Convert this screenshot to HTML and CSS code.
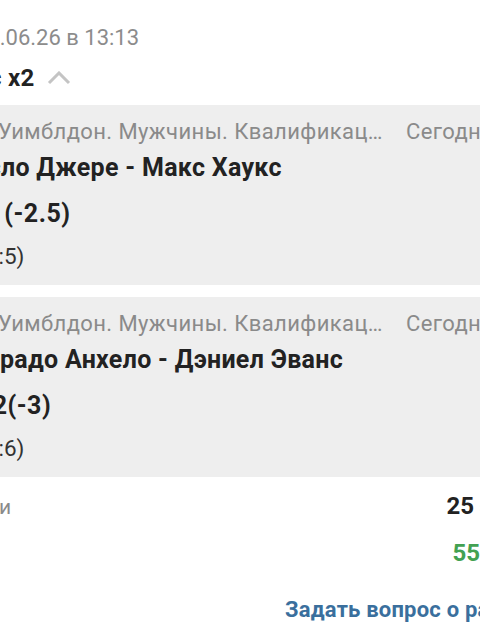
FILE: index.html
```html
<!DOCTYPE html>
<html lang="ru">
<head>
    <meta charset="UTF-8">
    <meta name="viewport" content="width=device-width, initial-scale=1.0">
    <title>Ставка</title>
    <link rel="stylesheet" href="styles.css">
</head>
<body>
    <div class="bet-screen">
        <div class="bet-header">
            <div class="bet-date">25.06.26 в 13:13</div>
            <div class="bet-title">
                <span class="bet-title-text">Экспресс x2</span>
                <svg class="chevron" width="24" height="14" viewBox="0 0 24 14">
                    <polyline points="2,12 12,2 22,12" fill="none" stroke="#c4c4c4" stroke-width="3"/>
                </svg>
            </div>
        </div>

        <div class="event-card">
            <div class="event-top">
                <span class="event-league">Уимблдон. Мужчины. Квалификация</span>
                <span class="event-time">Сегодня в 14:00</span>
            </div>
            <div class="event-teams teams-first">Ласло Джере - Макс Хаукс</div>
            <div class="event-outcome outcome-first">Фора 1 (-2.5)</div>
            <div class="event-score">Счёт (4:5)</div>
        </div>

        <div class="event-card">
            <div class="event-top">
                <span class="event-league">Уимблдон. Мужчины. Квалификация</span>
                <span class="event-time">Сегодня в 15:30</span>
            </div>
            <div class="event-teams teams-second">Коррадо Анхело - Дэниел Эванс</div>
            <div class="event-outcome outcome-second">Фора 2(-3)</div>
            <div class="event-score">Счёт (3:6)</div>
        </div>

        <div class="totals">
            <div class="total-row">
                <span class="total-label">Сумма ставки</span>
                <span class="total-value">25 ₽</span>
            </div>
            <div class="total-row">
                <span class="total-label">Выигрыш</span>
                <span class="total-value win">55 ₽</span>
            </div>
            <div class="ask-link">Задать вопрос о расчёте</div>
        </div>
    </div>
</body>
</html>
```

FILE: styles.css
```css
/* Reset and base font */
html, body {
    margin: 0;
    padding: 0;
    background-color: #ffffff;
    overflow: hidden;
    font-family: Roboto, "Noto Sans", sans-serif;
}
.bet-screen {
    width: 100%;
    white-space: nowrap;
}
/* Header: date and bet type */
.bet-header {
    padding-top: 23px;
}
.bet-date {
    font-size: 22px;
    line-height: 30px;
    color: #8c8c8c;
    text-indent: -25px;
}
.bet-title {
    display: flex;
    align-items: center;
    margin-top: 10px;
    height: 30px;
    margin-left: -107px;
}
.bet-title-text {
    font-size: 24px;
    font-weight: bold;
    line-height: 30px;
    color: #222222;
    letter-spacing: 0.3px;
}
.chevron {
    margin-left: 12px;
    margin-top: -1px;
}
/* Event cards */
.event-card {
    background-color: #eeeeee;
    margin-top: 12px;
    padding: 14px 0 16px 0;
    overflow: hidden;
}
.event-top {
    display: flex;
    font-size: 22px;
    line-height: 26px;
    letter-spacing: 0.4px;
    color: #8a8a8a;
}
.event-league {
    flex: 0 0 383px;
    overflow: hidden;
    text-overflow: ellipsis;
    text-indent: -2px;
}
.event-time {
    margin-left: 23px;
}
.event-teams {
    margin-top: 9px;
    font-size: 25px;
    font-weight: bold;
    line-height: 28px;
    letter-spacing: 0.3px;
    color: #222222;
}
.teams-first {
    text-indent: -44px;
}
.teams-second {
    text-indent: -45px;
}
.event-outcome {
    margin-top: 17px;
    font-size: 25px;
    font-weight: bold;
    line-height: 30px;
    letter-spacing: 0.5px;
    color: #222222;
}
.outcome-first {
    text-indent: -88px;
}
.outcome-second {
    text-indent: -78px;
}
.event-score {
    margin-top: 14px;
    font-size: 22.5px;
    line-height: 26px;
    color: #333333;
    text-indent: -77px;
}
/* Totals and link */
.totals {
    margin-top: 14px;
    margin-right: -33px;
    padding-right: 16px;
}
.total-row {
    display: flex;
    align-items: baseline;
    justify-content: space-between;
    line-height: 30px;
}
.total-row + .total-row {
    margin-top: 16px;
}
.total-label {
    font-size: 21px;
    color: #8a8a8a;
    text-indent: -128px;
}
.total-value {
    font-size: 24px;
    font-weight: bold;
    color: #222222;
}
.total-value.win {
    margin-right: -6px;
    color: #43a152;
}
.ask-link {
    margin-top: 26px;
    padding-left: 285px;
    font-size: 22px;
    font-weight: bold;
    line-height: 30px;
    letter-spacing: 0.2px;
    color: #3a6f9d;
}
```
